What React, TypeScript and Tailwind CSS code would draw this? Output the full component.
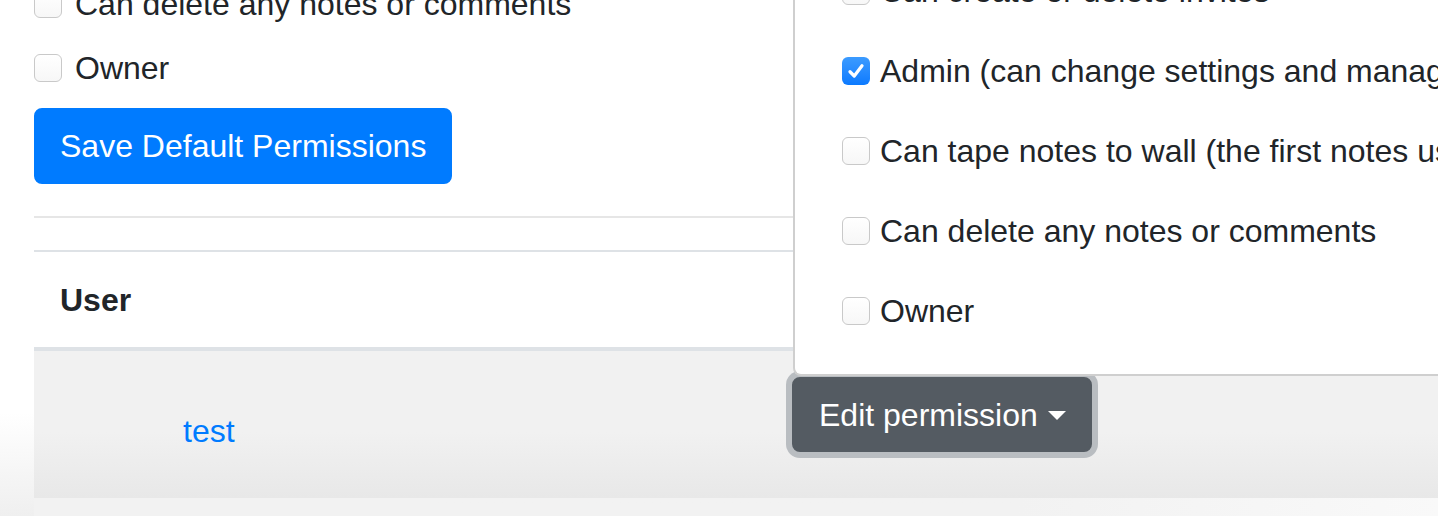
import React from 'react'

const FONT = "font-['Liberation_Sans','Helvetica_Neue',Arial,sans-serif]"

function Box({ checked = false }: { checked?: boolean }) {
  if (checked) {
    return (
      <span className="flex h-[28px] w-[28px] shrink-0 items-center justify-center rounded-[6px] bg-linear-to-b from-[#3b9bff] to-[#0a7aff]">
        <svg viewBox="0 0 16 16" className="h-[20px] w-[20px]" fill="none">
          <path d="M3.2 8.6 L6.6 12 L12.8 3.8" stroke="white" strokeWidth="2.6" strokeLinecap="round" strokeLinejoin="round" />
        </svg>
      </span>
    )
  }
  return (
    <span className="h-[28px] w-[28px] shrink-0 rounded-[6px] border border-[#c9c9c9] bg-linear-to-b from-white to-[#f7f7f7]" />
  )
}

const menuItems: { label: string; checked?: boolean }[] = [
  { label: 'Can create or delete invites' },
  { label: 'Admin (can change settings and manage users)', checked: true },
  { label: 'Can tape notes to wall (the first notes users see)' },
  { label: 'Can delete any notes or comments' },
  { label: 'Owner' },
]

export default function App() {
  return (
    <div className={`relative h-[516px] w-[1438px] overflow-hidden bg-linear-to-b from-white from-80% to-[#efefef] text-[32px] leading-[48px] text-[#212529] ${FONT}`}>
      <div className="ml-[34px] mt-[-20px]">
        {/* default permissions form */}
        {['Can delete any notes or comments', 'Owner'].map(label => (
          <div key={label} className="mb-4 flex h-12 items-center gap-[13px]">
            <Box />
            <span>{label}</span>
          </div>
        ))}
        <button className="h-[76px] rounded-[8px] border-2 border-[#007bff] bg-[#007bff] px-6 text-white">
          Save Default Permissions
        </button>
        <div className="mt-8 h-[2px] bg-[#e6e6e6]" />

        {/* users table */}
        <div className="mt-8 border-t-2 border-[#dee2e6]">
          <div className="flex h-[99px] items-center border-b-4 border-[#dee2e6] pl-[26px] font-bold">
            User
          </div>
          <div className="flex h-[147px] bg-linear-to-b from-[#f1f1f1] from-55% to-[#e8e8e8]">
            <div className="w-[758px] pl-[149px] pt-[56px] text-[#007bff]">test</div>
            <div className="pt-[26px]">
              <button className="flex h-[75px] w-[300px] items-center rounded-[8px] border-2 border-[#545b62] bg-[#545b62] pl-[25px] text-white shadow-[0_0_0_6px_#b9bdc1]">
                Edit permission
                <span className="ml-[10px] mt-[2px] h-0 w-0 border-x-[9px] border-t-[9px] border-x-transparent border-t-white" />
              </button>
            </div>
          </div>
          <div className="h-[18px] bg-linear-to-r from-[#f2f2f2] from-70% to-[#f9f9f9]" />
        </div>
      </div>

      {/* open dropdown menu */}
      <div className="absolute left-[793px] top-[-49px] w-[760px] rounded-bl-[8px] border-b-2 border-l-2 border-[#cfcfcf] bg-white pb-[23px] pl-[47px]">
        {menuItems.map(item => (
          <div key={item.label} className="flex h-20 items-center gap-[10px] whitespace-nowrap">
            <Box checked={item.checked} />
            <span>{item.label}</span>
          </div>
        ))}
      </div>
    </div>
  )
}
